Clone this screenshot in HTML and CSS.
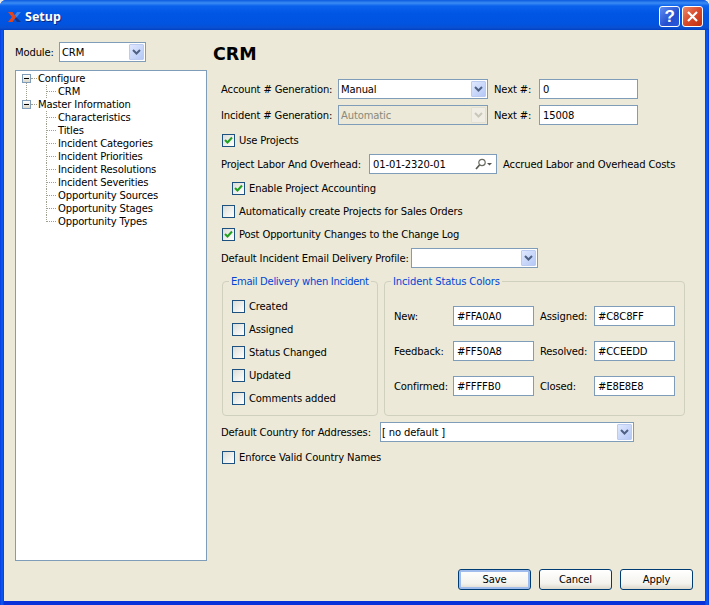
FILE: index.html
```html
<!DOCTYPE html>
<html lang="en">
<head>
    <meta charset="UTF-8">
    <meta name="viewport" content="width=device-width, initial-scale=1.0">
    <title>Setup</title>
    <link rel="stylesheet" href="styles.css">
</head>
<body>
    <div class="window">
        <div class="titlebar">
            <svg class="app-icon" width="13" height="10" viewBox="0 0 13 10">
                <path d="M0 0h4.500L8 5l-3.500 5H0l4-5z" fill="#e2451c"/>
                <path d="M13 0H9L6.800 3.200 8.500 5.500z" fill="#3f86e8"/>
                <path d="M8.500 5.500L13 10H9L6.800 7z" fill="#12348c"/>
            </svg>
            <span class="title">Setup</span>
            <div class="caption-btn help">?</div>
            <div class="caption-btn close">
                <svg width="13" height="13" viewBox="0 0 13 13"><path d="M2 2l9 9M11 2l-9 9" stroke="#fff" stroke-width="2.2"/></svg>
            </div>
        </div>

        <div class="content">
            <div class="sidebar">
                <div class="module-row">
                    <span class="module-label">Module:</span>
                    <div class="combo module-combo"><span>CRM</span><i class="arrow"><svg width="9" height="7" viewBox="0 0 9 7"><path d="M1 1l3.500 3.500L8 1" fill="none" stroke="#4d6185" stroke-width="2"/></svg></i></div>
                </div>
                <div class="tree">
                    <div class="node top first"><b class="expander"></b>Configure</div>
                    <div class="node leaf">CRM</div>
                    <div class="node top"><b class="expander"></b>Master Information</div>
                    <div class="node leaf">Characteristics</div>
                    <div class="node leaf">Titles</div>
                    <div class="node leaf">Incident Categories</div>
                    <div class="node leaf">Incident Priorities</div>
                    <div class="node leaf">Incident Resolutions</div>
                    <div class="node leaf">Incident Severities</div>
                    <div class="node leaf">Opportunity Sources</div>
                    <div class="node leaf">Opportunity Stages</div>
                    <div class="node leaf last">Opportunity Types</div>
                </div>
            </div>

            <div class="main">
                <h1>CRM</h1>

                <div class="row account-row">
                    <span class="label">Account # Generation:</span>
                    <div class="combo gen-combo"><span>Manual</span><i class="arrow"><svg width="9" height="7" viewBox="0 0 9 7"><path d="M1 1l3.500 3.500L8 1" fill="none" stroke="#4d6185" stroke-width="2"/></svg></i></div>
                    <span class="next-label">Next #:</span>
                    <div class="field next-field">0</div>
                </div>
                <div class="row incident-row">
                    <span class="label">Incident # Generation:</span>
                    <div class="combo gen-combo disabled"><span>Automatic</span><i class="arrow"><svg width="9" height="7" viewBox="0 0 9 7"><path d="M1 1l3.500 3.500L8 1" fill="none" stroke="#c9c7ba" stroke-width="2"/></svg></i></div>
                    <span class="next-label">Next #:</span>
                    <div class="field next-field">15008</div>
                </div>
                <div class="row use-row">
                    <label class="check"><i class="box"><svg width="9" height="9" viewBox="0 0 9 9"><path d="M1 4l2.500 2.500L8 1.500" fill="none" stroke="#21a121" stroke-width="2"/></svg></i>Use Projects</label>
                </div>
                <div class="row labor-row">
                    <span class="label labor-label">Project Labor And Overhead:</span>
                    <div class="field labor-field">
                        <span>01-01-2320-01</span>
                        <svg class="lookup" width="18" height="12" viewBox="0 0 18 12"><circle cx="7" cy="4.500" r="3.200" fill="none" stroke="#6b6b62" stroke-width="1.200"/><path d="M4.500 7L1 11" stroke="#55554d" stroke-width="1.600"/><path d="M12 5h5l-2.500 2.500z" fill="#55554d"/></svg>
                    </div>
                    <span class="accrued">Accrued Labor and Overhead Costs</span>
                </div>
                <div class="row enable-row">
                    <label class="check"><i class="box"><svg width="9" height="9" viewBox="0 0 9 9"><path d="M1 4l2.500 2.500L8 1.500" fill="none" stroke="#21a121" stroke-width="2"/></svg></i>Enable Project Accounting</label>
                </div>
                <div class="row auto-row">
                    <label class="check"><i class="box"></i>Automatically create Projects for Sales Orders</label>
                </div>
                <div class="row post-row">
                    <label class="check"><i class="box"><svg width="9" height="9" viewBox="0 0 9 9"><path d="M1 4l2.500 2.500L8 1.500" fill="none" stroke="#21a121" stroke-width="2"/></svg></i>Post Opportunity Changes to the Change Log</label>
                </div>
                <div class="row profile-row">
                    <span class="label">Default Incident Email Delivery Profile:</span>
                    <div class="combo profile-combo"><span></span><i class="arrow"><svg width="9" height="7" viewBox="0 0 9 7"><path d="M1 1l3.500 3.500L8 1" fill="none" stroke="#4d6185" stroke-width="2"/></svg></i></div>
                </div>

                <div class="groups">
                    <fieldset class="group email-group">
                        <legend>Email Delivery when Incident</legend>
                        <label class="check"><i class="box"></i>Created</label>
                        <label class="check"><i class="box"></i>Assigned</label>
                        <label class="check"><i class="box"></i>Status Changed</label>
                        <label class="check"><i class="box"></i>Updated</label>
                        <label class="check"><i class="box"></i>Comments added</label>
                    </fieldset>
                    <fieldset class="group colors-group">
                        <legend>Incident Status Colors</legend>
                        <div class="color-grid">
                            <span>New:</span><div class="field">#FFA0A0</div>
                            <span>Assigned:</span><div class="field">#C8C8FF</div>
                            <span>Feedback:</span><div class="field">#FF50A8</div>
                            <span>Resolved:</span><div class="field">#CCEEDD</div>
                            <span>Confirmed:</span><div class="field">#FFFFB0</div>
                            <span>Closed:</span><div class="field">#E8E8E8</div>
                        </div>
                    </fieldset>
                </div>

                <div class="row country-row">
                    <span class="label">Default Country for Addresses:</span>
                    <div class="combo country-combo"><span>[ no default ]</span><i class="arrow"><svg width="9" height="7" viewBox="0 0 9 7"><path d="M1 1l3.500 3.500L8 1" fill="none" stroke="#4d6185" stroke-width="2"/></svg></i></div>
                </div>
                <div class="row enforce-row">
                    <label class="check"><i class="box"></i>Enforce Valid Country Names</label>
                </div>

                <div class="buttons">
                    <button class="default-btn">Save</button>
                    <button>Cancel</button>
                    <button>Apply</button>
                </div>
            </div>
        </div>
    </div>
</body>
</html>
```

FILE: styles.css
```css
html, body {
    margin: 0;
    height: 100%;
}
body {
    font-family: "DejaVu Sans", sans-serif;
    font-size: 10px;
    letter-spacing: -0.14px;
    color: #000;
    background: #e8e8e4;
}
.window {
    height: 605px;
    display: flex;
    flex-direction: column;
    box-sizing: border-box;
    overflow: hidden;
    border-radius: 6px 6px 0 0;
    background: linear-gradient(to right, #0831d9 0, #0855ee 1px, #0855ee 3px, #0831d9 4px, #0831d9 705px, #0855ee 706px, #0855ee 708px, #0831d9 709px);
}

/* title bar */
.titlebar {
    height: 30px;
    flex: none;
    display: flex;
    align-items: center;
    padding: 3px 6px 0 8px;
    box-sizing: border-box;
    background: linear-gradient(to bottom, #0a5ae0 0, #3a8cf4 3px, #0a62ec 6px, #0055e4 14px, #0054e0 24px, #0a4fd0 28px, #0040c0 30px);
}
.app-icon {
    margin-right: 4px;
}
.title {
    flex: 1;
    color: #fff;
    font-family: "Noto Sans", sans-serif;
    font-weight: bold;
    font-size: 12.5px;
    letter-spacing: 0;
    text-shadow: 1px 1px 0 #0a2a80;
}
.caption-btn {
    width: 21px;
    height: 21px;
    box-sizing: border-box;
    border: 1px solid #fff;
    border-radius: 3px;
    margin-left: 2px;
    display: flex;
    align-items: center;
    justify-content: center;
    color: #fff;
}
.help {
    background: linear-gradient(135deg, #5f8cf0, #2450d0 60%, #2a58d8);
    font-family: "Liberation Sans", sans-serif;
    font-weight: bold;
    font-size: 17px;
}
.close {
    background: linear-gradient(135deg, #ec8a68, #d8482a 50%, #c03010);
}

/* main client area */
.content {
    flex: 1;
    display: flex;
    background: #ece9d8;
    margin: 0 4px 4px;
    padding: 12px 12px 11px 11px;
    min-height: 0;
}
.sidebar {
    width: 192px;
    flex: none;
    display: flex;
    flex-direction: column;
    margin-right: 14px;
}
.module-row {
    display: flex;
    align-items: center;
    height: 20px;
}
.module-label {
    width: 44px;
}
.tree {
    flex: 1;
    margin: 8px 0 29px;
    padding-top: 1px;
    background: #fff;
    border: 1px solid #7f9db9;
}
.node {
    height: 13px;
    line-height: 13px;
    position: relative;
    white-space: nowrap;
}
.top {
    padding-left: 22px;
}
.leaf {
    padding-left: 42px;
}
/* dotted connector lines */
.leaf::before, .top::before {
    content: "";
    position: absolute;
    top: 6px;
    border-top: 1px dotted #a0a090;
}
.leaf::before {
    left: 31px;
    width: 9px;
}
.top::before {
    left: 15px;
    width: 6px;
}
.leaf::after {
    content: "";
    position: absolute;
    left: 30px;
    top: 0;
    height: 13px;
    border-left: 1px dotted #a0a090;
}
.last::after {
    height: 7px;
}
.first::after {
    content: "";
    position: absolute;
    left: 10px;
    top: 10px;
    height: 20px;
    border-left: 1px dotted #a0a090;
}
.expander {
    position: absolute;
    left: 6px;
    top: 2px;
    width: 9px;
    height: 9px;
    box-sizing: border-box;
    border: 1px solid #7f9db9;
    background: linear-gradient(to bottom, #fff, #dcd8c8);
    z-index: 1;
}
.expander::after {
    content: "";
    position: absolute;
    left: 1px;
    top: 3px;
    width: 5px;
    height: 1px;
    background: #000;
}

/* form rows */
.main {
    flex: 1;
    display: flex;
    flex-direction: column;
    min-width: 0;
}
h1 {
    font-size: 17.5px;
    letter-spacing: 0;
    line-height: 24px;
    height: 24px;
    margin: 0 0 13px -8px;
}
.row {
    display: flex;
    align-items: center;
    height: 20px;
    flex: none;
    white-space: nowrap;
}
.incident-row { margin-top: 6px; }
.use-row { margin-top: 5px; }
.labor-row { margin-top: 4px; }
.enable-row { margin-top: 4px; padding-left: 11px; }
.auto-row { margin-top: 3px; }
.post-row { margin-top: 3px; }
.profile-row { margin-top: 4px; }
.country-row { margin-top: 6px; }
.enforce-row { margin-top: 5px; }
.use-row, .auto-row, .post-row, .enforce-row {
    padding-left: 1px;
}
.label {
    width: 117px;
    flex: none;
}
.labor-label { width: 148px; }
.profile-row .label { width: 190px; }
.country-row .label { width: 159px; }

.field, .combo {
    height: 20px;
    box-sizing: border-box;
    background: #fff;
    border: 1px solid #7f9db9;
    display: flex;
    align-items: center;
    padding-left: 2px;
    flex: none;
    position: relative;
}
.combo span {
    flex: 1;
}
.arrow {
    width: 15px;
    height: 16px;
    margin-right: 1px;
    box-sizing: border-box;
    border: 1px solid #bcccf0;
    border-radius: 1px;
    background: linear-gradient(135deg, #e0e8fe, #b4c8f6);
    display: flex;
    align-items: center;
    justify-content: center;
}
.disabled {
    background: #ece9d8;
    color: #8a8878;
}
.disabled .arrow {
    background: #f0eee4;
    border-color: #e2e0d4;
}
.module-combo { width: 87px; }
.gen-combo { width: 150px; }
.profile-combo { width: 127px; }
.country-combo {
    width: 254px;
    padding-left: 1px;
}
.next-label {
    margin: 0 0 0 6px;
    width: 45px;
}
.next-field {
    width: 99px;
    padding-left: 3px;
}
.labor-field {
    width: 128px;
    padding-left: 3px;
}
.labor-field span { flex: 1; }
.lookup { margin-right: 3px; }
.accrued { margin-left: 6px; }

.check {
    display: flex;
    align-items: center;
}
.box {
    width: 13px;
    height: 13px;
    flex: none;
    box-sizing: border-box;
    border: 1px solid #1c5180;
    background: linear-gradient(135deg, #dcdcd7, #fff);
    margin-right: 4px;
    display: flex;
    align-items: center;
    justify-content: center;
}

/* group boxes */
.groups {
    display: flex;
    gap: 6px;
    margin-top: 7px;
    height: 141px;
    margin-left: 1px;
    flex: none;
}
.group {
    margin: 0;
    min-width: 0;
    box-sizing: border-box;
    border: 1px solid #d0d0bf;
    border-radius: 4px;
    padding: 0;
}
.group legend {
    color: #0046d5;
    padding: 0 2px;
    margin-left: -3px;
    line-height: 13px;
    white-space: nowrap;
}
.email-group {
    width: 156px;
    padding: 7px 0 0 9px;
}
.email-group legend {
    letter-spacing: -0.3px;
}
.email-group .check {
    height: 23px;
}
.colors-group {
    width: 301px;
    padding: 18px 0 0 9px;
}
.color-grid {
    display: grid;
    grid-template-columns: 59px 81px 60px 81px;
    grid-auto-rows: 20px;
    row-gap: 15px;
    align-items: center;
}
.color-grid .field {
    padding-left: 3px;
}
.color-grid span {
    display: block;
}
.color-grid span:nth-child(4n+3) {
    padding-left: 6px;
}

/* bottom buttons */
.buttons {
    margin-top: auto;
    display: flex;
    justify-content: flex-end;
    gap: 8px;
}
button {
    width: 73px;
    height: 21px;
    padding: 0;
    font: inherit;
    letter-spacing: inherit;
    color: #000;
    border: 1px solid #003c74;
    border-radius: 3px;
    background: linear-gradient(to bottom, #fff, #f4f3ee 70%, #dcd8cc);
}
.default-btn {
    box-shadow: inset 0 0 0 2px #a0bcec;
}
```
